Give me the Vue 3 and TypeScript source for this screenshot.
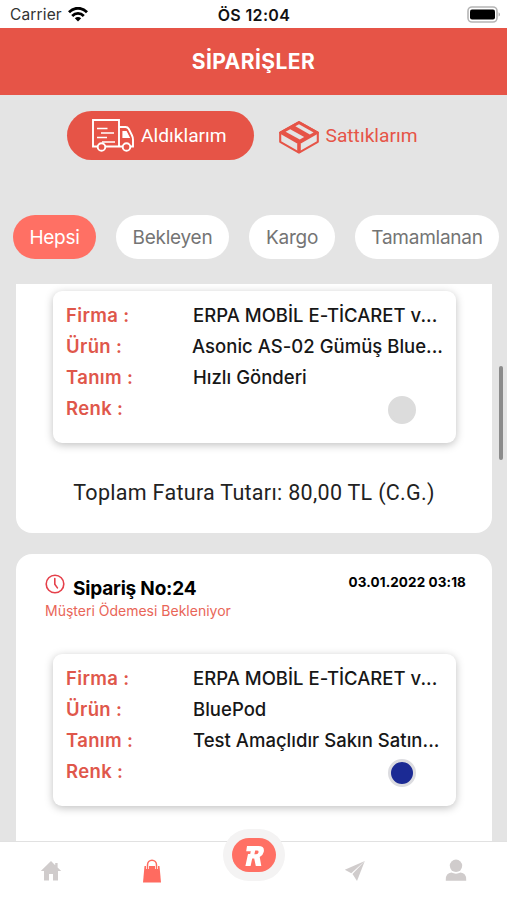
<script setup lang="ts">
interface Row {
  label: string
  value: string
  key: string
}
interface Order {
  id: number
  rows: Row[]
  color: string
}

const filters = [
  { name: 'Hepsi', key: 'all', active: true },
  { name: 'Bekleyen', key: 'waiting', active: false },
  { name: 'Kargo', key: 'cargo', active: false },
  { name: 'Tamamlanan', key: 'done', active: false },
]

const orders: Order[] = [
  {
    id: 25,
    color: '#dcdcdc',
    rows: [
      { label: 'Firma :', value: 'ERPA MOBİL E-TİCARET v...', key: 'company' },
      { label: 'Ürün :', value: 'Asonic AS-02 Gümüş Blue...', key: 'product' },
      { label: 'Tanım :', value: 'Hızlı Gönderi', key: 'description' },
      { label: 'Renk :', value: '', key: 'color' },
    ],
  },
  {
    id: 24,
    color: '#1b2a94',
    rows: [
      { label: 'Firma :', value: 'ERPA MOBİL E-TİCARET v...', key: 'company' },
      { label: 'Ürün :', value: 'BluePod', key: 'product' },
      { label: 'Tanım :', value: 'Test Amaçlıdır Sakın Satın...', key: 'description' },
      { label: 'Renk :', value: '', key: 'color' },
    ],
  },
]
</script>

<template>
  <div class="screen">
    <div class="status">
      <div class="carrier">
        <span>Carrier</span>
        <svg width="20" height="15" viewBox="0 0 20 15" fill="none" stroke="#000" stroke-width="2.8">
          <path d="M1 5.2C6-.1 14-.1 19 5.2" />
          <path d="M4.2 8.9c3.3-3.3 8.3-3.3 11.6 0" />
          <path d="M10 14.6 6.8 11.2c1.8-1.7 4.6-1.7 6.4 0Z" fill="#000" stroke="none" />
        </svg>
      </div>
      <span class="clock">ÖS 12:04</span>
      <svg class="battery" width="34" height="17" viewBox="0 0 34 17">
        <rect x="1" y="1" width="29" height="15" rx="4" fill="#fff" stroke="#b5b5b5" stroke-width="1.6" />
        <rect x="3" y="3.6" width="25" height="9.8" rx="2" fill="#000" />
        <path d="M31.6 6.2c1.8.8 1.8 3.5 0 4.4Z" fill="#aaa" />
      </svg>
    </div>

    <header class="header"><span>SİPARİŞLER</span></header>

    <div class="modes">
      <button class="mode bought">
        <svg width="42" height="33" viewBox="0 0 42 33" fill="none" stroke="#fff" stroke-width="1.9">
          <path d="M5.5 27.5H1V1h26v26.5H13.5M27 8h6.5q2.2 0 3.3 2l3 6q1.2 2.3 1.2 4.8v6.7h-2.6M27 27.5h3.5" />
          <path d="M5 9.5h10.5M9 14h13M5 18.5h10M10 23h13" stroke-width="1.7" />
          <path d="M31 12.5h3.2l3 6H31Z" fill="#fff" stroke-width="1.2" />
          <circle cx="9.5" cy="28" r="3.8" />
          <circle cx="34.5" cy="28" r="3.8" />
        </svg>
        <span>Aldıklarım</span>
      </button>
      <button class="mode sold">
        <svg width="40" height="33" viewBox="0 0 40 33" fill="none" stroke="#e65447" stroke-width="2.1" stroke-linejoin="round">
          <path d="M20 1.2 38.8 11.6v9.2L20 31.6 1.2 20.8v-9.2Z" />
          <path d="M1.2 11.6 20 1.2l18.8 10.4L20 22.4Z" fill="#e65447" />
          <path d="M16.4 5.2 20 3.2l14.6 8.2-3.8 2.1Z" fill="#e4e4e4" stroke="none" />
          <path d="m6.6 10.7 4.6-2.5 14 7.8-4.4 2.5Z" fill="#e4e4e4" stroke="none" />
          <path d="M20 22.4v9" stroke-width="3.6" />
        </svg>
        <span>Sattıklarım</span>
      </button>
    </div>

    <nav class="filters">
      <button v-for="f in filters" :key="f.key" class="chip" :class="[f.key, { active: f.active }]">
        <span>{{ f.name }}</span>
      </button>
    </nav>

    <main class="list">
      <article v-for="(o, i) in orders" :key="o.id" class="order" :class="{ cut: i === 0 }">
        <div v-if="i > 0" class="order-head">
          <div class="title-row">
            <svg width="20" height="20" viewBox="0 0 20 20" fill="none" stroke="#e5404a" stroke-width="1.6" stroke-linecap="round">
              <circle cx="10" cy="10" r="8.8" />
              <path d="M9.8 4.5v5.8l2.6 3.6" />
            </svg>
            <h2><span>Sipariş No:24</span></h2>
            <time><span>03.01.2022 03:18</span></time>
          </div>
          <p class="state"><span>Müşteri Ödemesi Bekleniyor</span></p>
        </div>
        <section class="details">
          <div v-for="r in o.rows" :key="r.key" class="row">
            <span class="label">{{ r.label }}</span>
            <span v-if="r.value" class="value" :class="r.key">{{ r.value }}</span>
            <i v-else class="swatch" :style="{ backgroundColor: o.color }"></i>
          </div>
        </section>
        <p v-if="i === 0" class="total"><span>Toplam Fatura Tutarı: 80,00 TL (C.G.)</span></p>
      </article>
    </main>

    <footer class="tabs">
      <div class="tab">
        <svg width="22" height="22" viewBox="0 0 22 22" fill="#d0cccc">
          <path d="M11 1 .8 11H4v9.6h5V14h4v6.6h5V11h3.2L17.6 7.5V3h-2.4v2.2Z" />
        </svg>
      </div>
      <div class="tab">
        <svg width="20" height="24" viewBox="0 0 20 24">
          <path d="M2.5 7h15l1.5 16.4H1Z" fill="#ff6b60" />
          <path d="M5.5 10V6a4.5 4.8 0 0 1 9 0v4" fill="none" stroke="#fff" stroke-width="3" />
          <path d="M5.5 10V6a4.5 4.8 0 0 1 9 0v4" fill="none" stroke="#ff6b60" stroke-width="1.5" />
        </svg>
      </div>
      <div class="tab middle">
        <div class="brand">
          <svg width="44" height="34" viewBox="0 0 44 34">
            <rect width="44" height="34" rx="17" fill="#ff7064" />
            <path d="M15 8H26.500q6.500 0 5.200 6-.9 3.800-4 5L29.300 28h-5.500l-1.600-7.500h-2L18.600 28h-5.200l2.600-12h2.200l.6-2.800h-4.600Zm8.200 4.600-.8 3.600h1.800q1.900 0 2.300-1.800t-1.500-1.800Z" fill="#fff" fill-rule="evenodd" />
          </svg>
        </div>
      </div>
      <div class="tab">
        <svg width="22" height="22" viewBox="0 0 22 22" fill="#d0cccc">
          <path d="M20.800 1 .8 9.800l6.500 3.400Z" />
          <path d="m20.800 1-12.300 13L13 21Z" />
        </svg>
      </div>
      <div class="tab">
        <svg width="22" height="24" viewBox="0 0 22 24" fill="#d0cccc">
          <circle cx="11" cy="7.800" r="6.200" />
          <path d="M.8 22.800v-1.400q0-6 5.600-6.800 4.600 2.300 9.200 0 5.600.8 5.600 6.800v1.400Z" />
        </svg>
      </div>
    </footer>
    <div class="scrollbar"></div>
  </div>
</template>

<style>
body {
  margin: 0;
}
</style>

<style scoped>
.screen {
  position: relative;
  display: flex;
  flex-direction: column;
  width: 507px;
  height: 900px;
  overflow: hidden;
  background: #e4e4e4;
  font-family: Inter, 'Liberation Sans', sans-serif;
  white-space: nowrap;
}
h2, p {
  margin: 0;
}
button {
  border: 0;
  padding: 0;
  background: none;
  font: inherit;
  white-space: nowrap;
}
svg {
  display: block;
  flex: none;
}
.status {
  display: grid;
  grid-template-columns: 1fr auto 1fr;
  align-items: center;
  height: 28px;
  padding: 0 6px 0 10px;
  box-sizing: border-box;
  background: #fff;
}
.carrier {
  display: flex;
  align-items: center;
  gap: 6px;
  padding-top: 1px;
  color: #333;
  font-size: 15.5px;
  letter-spacing: 0.15px;
}
.clock {
  padding-top: 1px;
  margin-left: -3px;
  color: #111;
  font-size: 16px;
  font-weight: 600;
  letter-spacing: 0.35px;
}
.battery {
  justify-self: end;
}
.header {
  display: flex;
  align-items: center;
  justify-content: center;
  height: 67px;
  background: #e65447;
  color: #fff;
  font-size: 21px;
  font-weight: 700;
  letter-spacing: 0.45px;
}
.modes {
  display: flex;
  height: 49px;
  margin: 16px 0 55px 67px;
  font-family: Roboto, sans-serif;
  font-size: 19.2px;
}
.mode {
  display: flex;
  align-items: center;
  gap: 7px;
}
.bought {
  width: 187px;
  box-sizing: border-box;
  padding-left: 25px;
  border-radius: 25px;
  background: #e65447;
  color: #fff;
}
.sold {
  margin-left: 24.5px;
  color: #e65447;
}
.sold svg {
  margin-top: 4px;
}
.filters {
  display: flex;
  gap: 20px;
  height: 44px;
  margin: 0 0 25px 13px;
}
.chip {
  flex: none;
  border-radius: 22px;
  background: #fff;
  color: #747474;
  font-size: 19px;
  letter-spacing: -0.25px;
}
.chip.active {
  background: #ff7064;
  color: #fff;
}
.all { width: 83px; }
.waiting { width: 113px; }
.cargo { width: 86px; }
.done { width: 144px; }
.list {
  display: flex;
  flex: 1;
  flex-direction: column;
  gap: 21px;
  min-height: 0;
  padding: 0 15px 0 16px;
  overflow: hidden;
}
.order {
  flex: none;
  height: 330px;
  border-radius: 16px;
  background: #fff;
  box-sizing: border-box;
}
.order.cut {
  height: 249px;
  padding-top: 7px;
  border-radius: 0 0 16px 16px;
}
.order-head {
  height: 100px;
  padding: 20px 26px 0 29px;
  box-sizing: border-box;
}
.title-row {
  display: flex;
  height: 28px;
}
h2 {
  padding: 3px 0 0 8px;
  font-size: 19px;
  font-weight: 700;
  line-height: 24px;
  letter-spacing: -0.2px;
}
time {
  margin-left: auto;
  font-size: 13.5px;
  font-weight: 700;
  line-height: 16px;
  letter-spacing: 0.1px;
}
.state {
  color: #e96558;
  font-size: 14px;
  line-height: 18px;
}
.details {
  display: flex;
  flex-direction: column;
  width: 403px;
  height: 152px;
  margin-left: 37px;
  padding: 9px 13px 0;
  box-sizing: border-box;
  border-radius: 9px;
  background: #fff;
  box-shadow: 0 2px 8px rgba(0, 0, 0, 0.25);
}
.row {
  display: flex;
  height: 31px;
  line-height: 31px;
  font-size: 18.5px;
}
.label {
  width: 127px;
  color: #df574b;
  font-weight: 600;
  letter-spacing: 0.35px;
}
.value {
  color: #171717;
  font-weight: 500;
  letter-spacing: 0.02px;
}
.swatch {
  width: 22px;
  height: 22px;
  margin: 3px 0 0 195px;
  border: 3px solid #dcdce0;
  border-radius: 50%;
}
.order.cut .swatch {
  border-color: #dcdcdc;
}
.total {
  margin-top: 35px;
  color: #222;
  font-family: Roboto, sans-serif;
  font-size: 21.5px;
  line-height: 30px;
  letter-spacing: 0.3px;
  text-align: center;
}
.tabs {
  display: flex;
  flex: none;
  height: 59px;
  box-sizing: border-box;
  border-top: 1px solid #e1e1e1;
  background: #fff;
}
.tab {
  display: flex;
  flex: 1;
  justify-content: center;
  align-items: center;
}
.tab:last-child svg {
  margin-top: -3px;
}
.middle {
  align-items: flex-start;
}
.brand {
  display: flex;
  flex: none;
  align-items: center;
  justify-content: center;
  width: 62px;
  height: 52px;
  margin-top: -13px;
  border-radius: 26px;
  background: #f4f3f3;
}
.scrollbar {
  position: absolute;
  top: 366px;
  right: 4px;
  width: 4px;
  height: 94px;
  border-radius: 2px;
  background: #8b8b8b;
}
</style>
